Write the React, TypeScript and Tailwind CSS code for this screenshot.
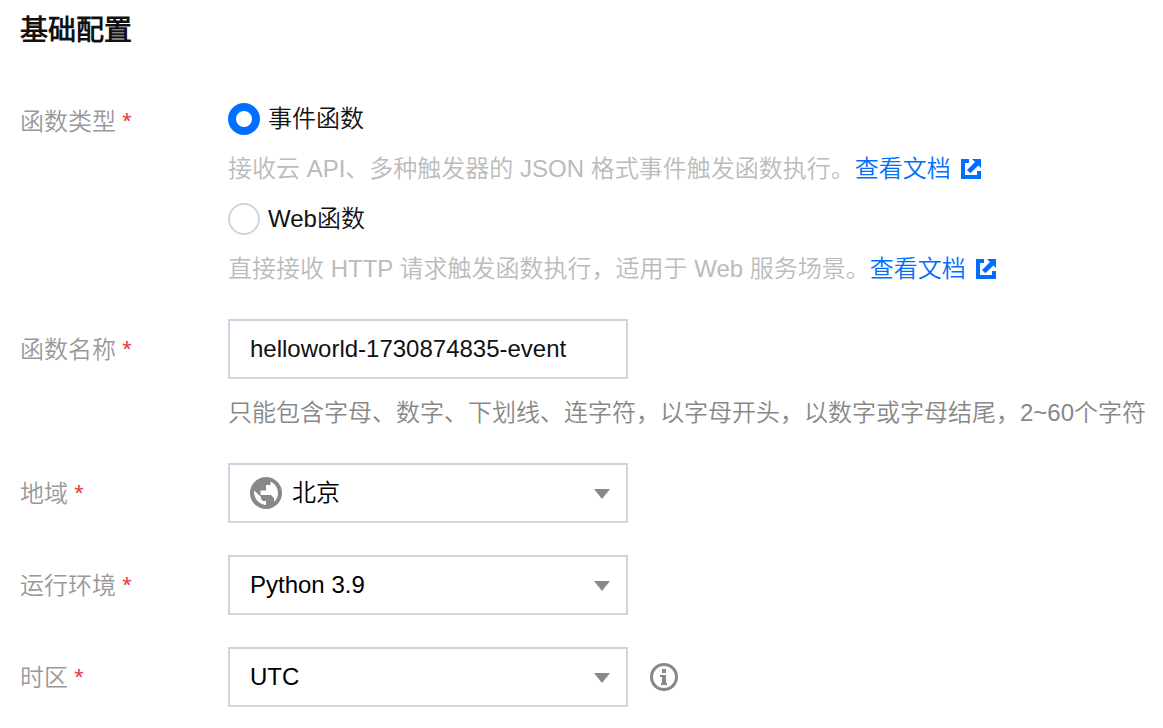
import type { ReactNode } from 'react';

function Row({ label, className, labelClass, children }: { label: string; className: string; labelClass: string; children: ReactNode }) {
  return (
    <div className={`flex items-start ${className}`}>
      <div className={`flex w-[208px] shrink-0 items-start leading-8 text-[#999] ${labelClass}`}>
        {label}
        <span className="ml-[6px] mt-[-2px] h-8 font-['Open_Sans'] text-[18px] leading-8 font-semibold text-[#e54545]">*</span>
      </div>
      <div className="min-w-0">{children}</div>
    </div>
  );
}

function Radio({ label, checked }: { label: string; checked?: boolean }) {
  return (
    <label className="flex h-8 items-center gap-2">
      <span className={checked ? 'size-8 rounded-full border-[8px] border-[#006eff]' : 'size-8 rounded-full border-2 border-[#cfd5de]'} />
      <span>{label}</span>
    </label>
  );
}

function DocLink() {
  return (
    <a className="inline-flex items-center gap-[10px] text-[#006eff]">
      查看文档
      <svg width="20" height="20" viewBox="0 0 20 20" fill="currentColor">
        <path d="M0 0H8V4H4V16H16V12H20V20H0ZM11 0H20V9L17.4 6.4L9.3 14.2L6 11L14 3Z" />
      </svg>
    </a>
  );
}

function Select({ value, icon }: { value: string; icon?: ReactNode }) {
  return (
    <div className="flex h-[60px] w-[400px] items-center border-2 border-[#cfd5de] px-5 text-black">
      {icon}
      <span>{value}</span>
      <svg className="mr-[-4px] ml-auto mt-px" width="16" height="10" viewBox="0 0 16 10">
        <path d="M0 0H16L8 10Z" fill="#888" />
      </svg>
    </div>
  );
}

function Globe() {
  return (
    <svg className="mr-[10px]" width="32" height="32" viewBox="0 0 32 32">
      <circle cx="16" cy="16" r="16" fill="#888" />
      <path d="M20.5 4.7V8H16V13.5H10.5V18H21L24 21V25C26.6 22.7 28 19.5 28 16C28 10.8 24.9 6.5 20.5 4.7ZM4.2 13.5C3.2 21.3 8.9 27.4 16 28V24H13L11 22V20Z" fill="#fff" />
    </svg>
  );
}

export default function App() {
  return (
    <main className="h-[728px] w-[1163px] overflow-hidden bg-white pl-5 pt-[10px] font-['Liberation_Sans','Noto_Sans_CJK_SC_DemiLight','Noto_Sans_CJK_SC',sans-serif] text-2xl leading-8 font-[350] whitespace-nowrap text-[#111]">
      <h1 className="h-10 pt-px text-[28px] leading-10 font-bold">基础配置</h1>
      <Row label="函数类型" className="mt-[53px] h-[216px]" labelClass="pt-[3px]">
        <Radio label="事件函数" checked />
        <p className="my-[18px] flex h-8 items-center text-[#bbb]">接收云 API、多种触发器的 JSON 格式事件触发函数执行。<DocLink /></p>
        <Radio label="Web函数" />
        <p className="mt-[18px] flex h-8 items-center text-[#bbb]">直接接收 HTTP 请求触发函数执行，适用于 Web 服务场景。<DocLink /></p>
      </Row>
      <Row label="函数名称" className="h-36" labelClass="pt-[15px]">
        <div className="flex h-[60px] w-[400px] items-center border-2 border-[#cfd5de] px-5">helloworld-1730874835-event</div>
        <p className="mt-[18px] text-[#888]">只能包含字母、数字、下划线、连字符，以字母开头，以数字或字母结尾，2~60个字符</p>
      </Row>
      <Row label="地域" className="h-[92px]" labelClass="pt-[15px]"><Select value="北京" icon={<Globe />} /></Row>
      <Row label="运行环境" className="h-[92px]" labelClass="pt-[15px]"><Select value="Python 3.9" /></Row>
      <Row label="时区" className="h-[60px]" labelClass="pt-[15px]">
        <div className="flex items-center gap-[22px]">
          <Select value="UTC" />
          <svg width="28" height="28" viewBox="0 0 28 28" fill="#888">
            <circle cx="14" cy="14" r="12.5" fill="none" stroke="#888" strokeWidth="3" />
            <path d="M12 6H16V10H12ZM10 12H16V20H17V22H11V20H12V14H10Z" />
          </svg>
        </div>
      </Row>
    </main>
  );
}
